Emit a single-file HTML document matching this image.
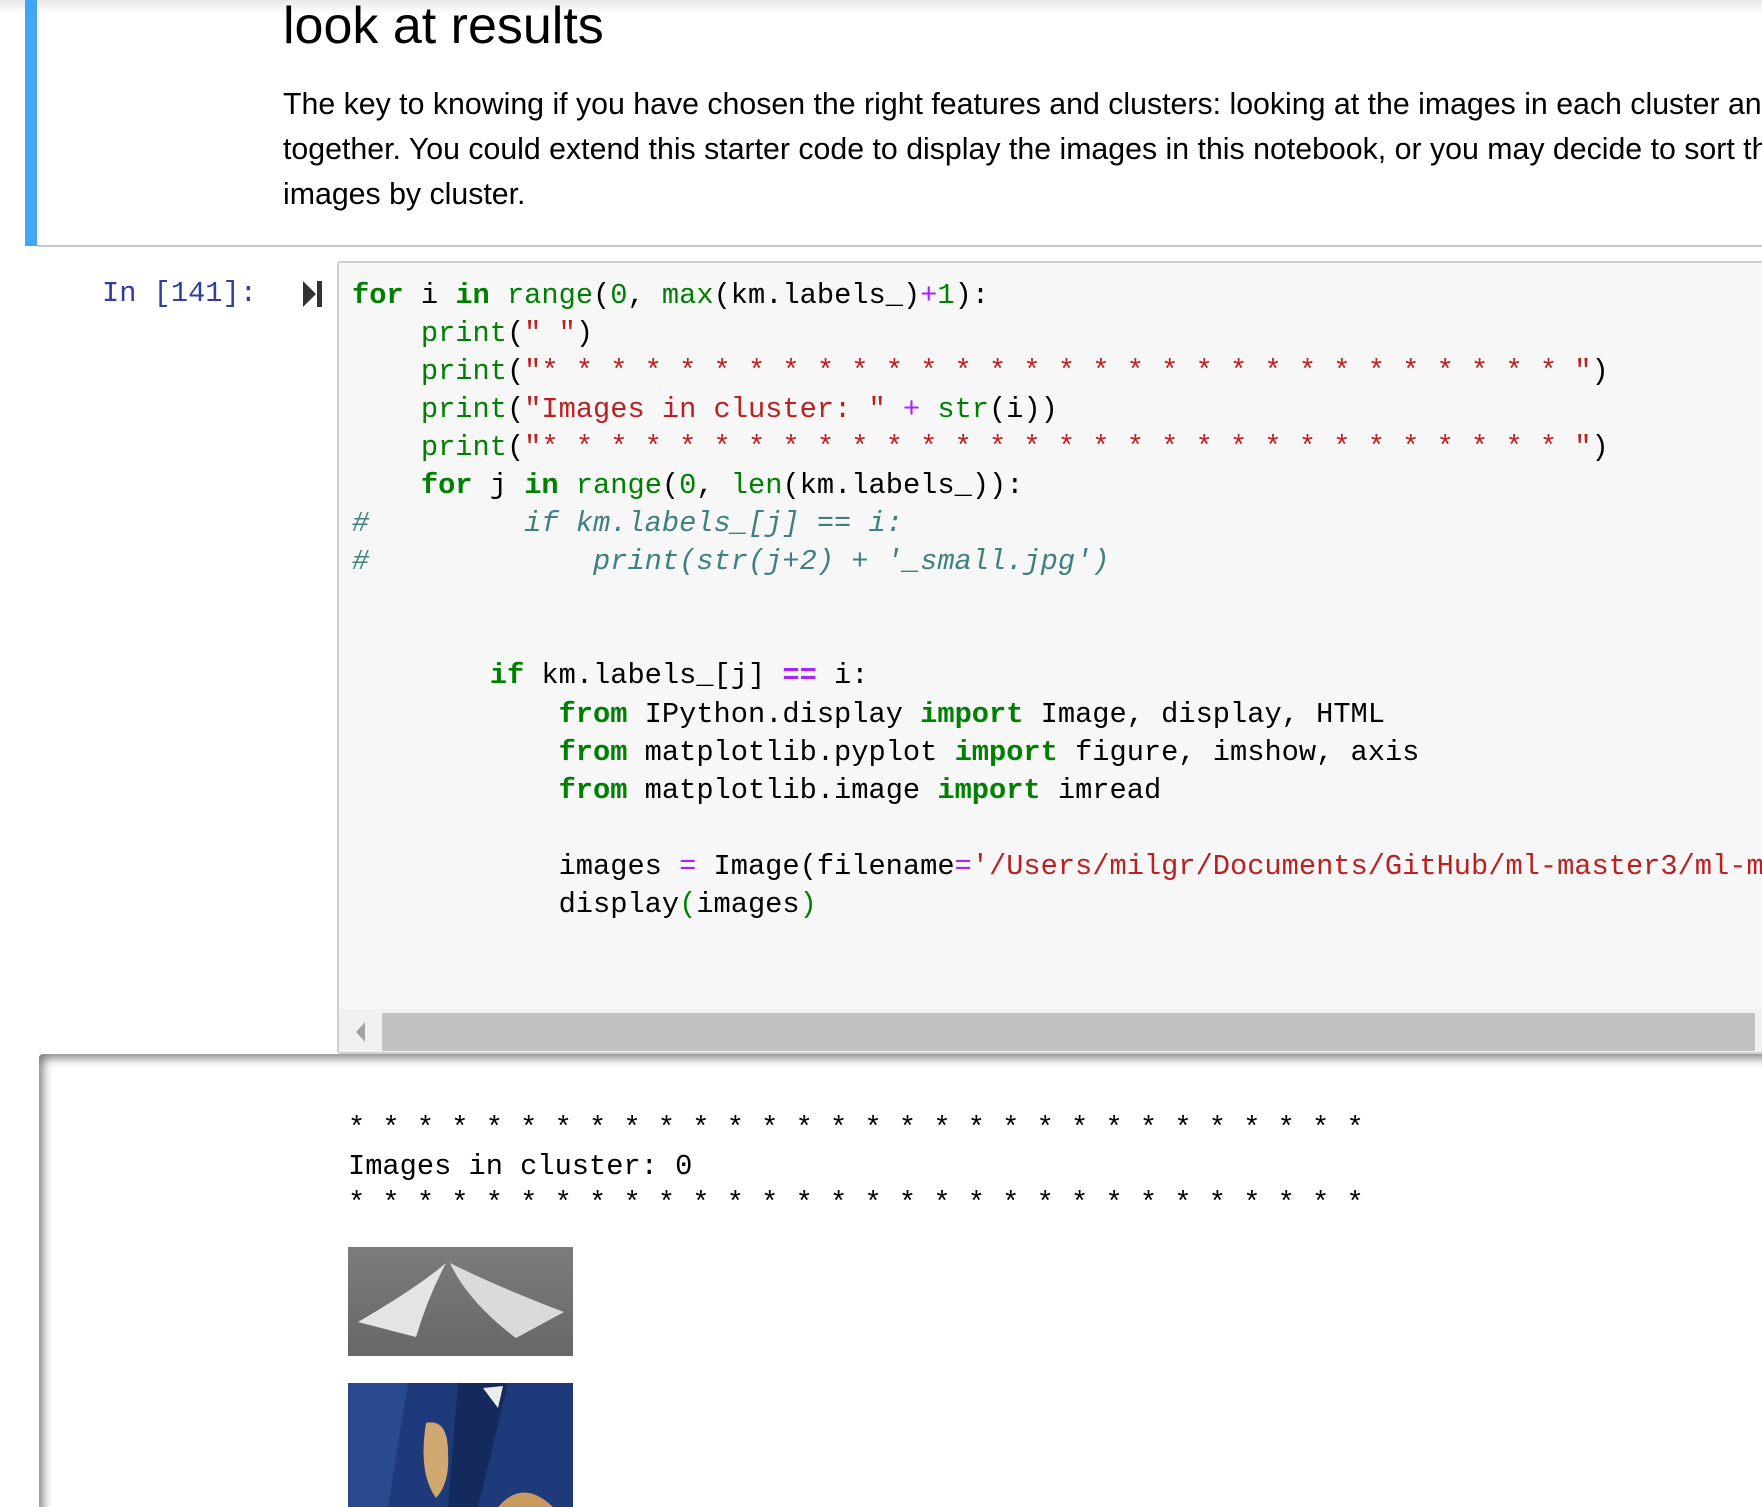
<!DOCTYPE html>
<html><head><meta charset="utf-8"><style>
html,body{margin:0;padding:0;width:1762px;height:1507px;overflow:hidden;background:#fff;position:relative}
.a{position:absolute}
.sans{font-family:"Liberation Sans",Arial,sans-serif;color:#000}
.mono{font-family:"Liberation Mono",monospace;font-size:28.7px;white-space:pre;line-height:38.05px}
.k{color:#008000;font-weight:bold}.b{color:#008000}.s{color:#ba2121}.o{color:#aa22ff}.ob{color:#aa22ff;font-weight:bold}.c{color:#408080;font-style:italic}.n{color:#008000}
</style></head><body>
<div class="a" style="left:0;top:0;width:1762px;height:14px;background:linear-gradient(#e8e8e8,#fff)"></div>
<div class="a" style="left:25px;top:0;width:12px;height:246px;background:#42a5f5"></div>
<div class="a" style="left:37px;top:245px;width:1725px;height:2px;background:#c8c8c8"></div>
<div class="a sans" style="left:283px;top:-4px;font-size:52px;line-height:60px;white-space:nowrap">look at results</div>
<div class="a sans" style="left:283px;top:82px;font-size:30.3px;line-height:45px;white-space:nowrap;width:1479px;overflow:hidden">The key to knowing if you have chosen the right features and clusters: looking at the images in each cluster and seeing if they belong<br>together. You could extend this starter code to display the images in this notebook, or you may decide to sort the<br>images by cluster.</div>

<div class="a mono" style="left:102px;top:275px;color:#303f9f">In [141]:</div>
<svg class="a" style="left:302px;top:280px" width="22" height="28" viewBox="0 0 22 28"><path d="M1 1 L14 14 L1 27 Z" fill="#333"/><rect x="15" y="1" width="5" height="26" fill="#333"/></svg>

<div class="a" style="left:337px;top:261px;width:1440px;height:789px;background:#f7f7f7;border:2px solid #cfcfcf;border-radius:3px;overflow:hidden">
<div class="a mono" style="left:13px;top:14px;color:#000"><span class="k">for</span> i <span class="k">in</span> <span class="b">range</span>(<span class="n">0</span>, <span class="b">max</span>(km.labels_)<span class="o">+</span><span class="n">1</span>):
    <span class="b">print</span>(<span class="s">" "</span>)
    <span class="b">print</span>(<span class="s">"* * * * * * * * * * * * * * * * * * * * * * * * * * * * * * "</span>)
    <span class="b">print</span>(<span class="s">"Images in cluster: "</span> <span class="o">+</span> <span class="b">str</span>(i))
    <span class="b">print</span>(<span class="s">"* * * * * * * * * * * * * * * * * * * * * * * * * * * * * * "</span>)
    <span class="k">for</span> j <span class="k">in</span> <span class="b">range</span>(<span class="n">0</span>, <span class="b">len</span>(km.labels_)):
<span class="c">#         if km.labels_[j] == i:</span>
<span class="c">#             print(str(j+2) + '_small.jpg')</span>


        <span class="k">if</span> km.labels_[j] <span class="ob">==</span> i:
            <span class="k">from</span> IPython.display <span class="k">import</span> Image, display, HTML
            <span class="k">from</span> matplotlib.pyplot <span class="k">import</span> figure, imshow, axis
            <span class="k">from</span> matplotlib.image <span class="k">import</span> imread

            images <span class="o">=</span> Image(filename<span class="o">=</span><span class="s">'/Users/milgr/Documents/GitHub/ml-master3/ml-master/images/'</span>)
            display<span class="b">(</span>images<span class="b">)</span></div>
<div class="a" style="left:0;top:746px;width:1440px;height:43px;background:#f1f1f1"></div>
<svg class="a" style="left:15px;top:758px" width="14" height="22"><path d="M11 1 L2 11 L11 21 Z" fill="#a3a3a3"/></svg>
<div class="a" style="left:43px;top:750px;width:1373px;height:38px;background:#c1c1c1"></div>
</div>

<div class="a" style="left:39px;top:1054px;width:1740px;height:470px;background:#fff;border-radius:4px;box-shadow:inset 6px 6px 10px -2px rgba(0,0,0,.5)"></div>
<div class="a mono" style="left:348px;top:1110px;color:#000;line-height:37.5px">* * * * * * * * * * * * * * * * * * * * * * * * * * * * * * 
Images in cluster: 0
* * * * * * * * * * * * * * * * * * * * * * * * * * * * * * </div>
<svg class="a" style="left:348px;top:1247px" width="225" height="109" viewBox="0 0 225 109">
<defs><linearGradient id="g" x1="0" y1="0" x2="0" y2="1"><stop offset="0" stop-color="#7c7c7c"/><stop offset="1" stop-color="#676767"/></linearGradient></defs>
<rect width="225" height="109" fill="url(#g)"/>
<path d="M98 16 Q70 40 10 75 L68 90 Q80 50 98 16Z" fill="#e4e4e4"/>
<path d="M102 16 Q120 55 168 91 L216 65 Q150 40 102 16Z" fill="#dadada"/>
</svg>
<svg class="a" style="left:348px;top:1383px" width="225" height="124" viewBox="0 0 225 124">
<rect width="225" height="124" fill="#1e3a7a"/><path d="M0 0 H60 L40 124 H0Z" fill="#2a4a90"/>
<path d="M110 0 L160 0 L130 124 L100 124 Z" fill="#0f1f48" opacity=".6"/>
<path d="M78 40 Q100 35 100 70 Q102 100 88 115 Q70 90 78 40Z" fill="#d0a870"/>
<path d="M135 5 L155 3 L150 25 Z" fill="#ececec"/><path d="M150 124 Q175 95 205 124 Z" fill="#c89a5e"/>
</svg>
</body></html>
